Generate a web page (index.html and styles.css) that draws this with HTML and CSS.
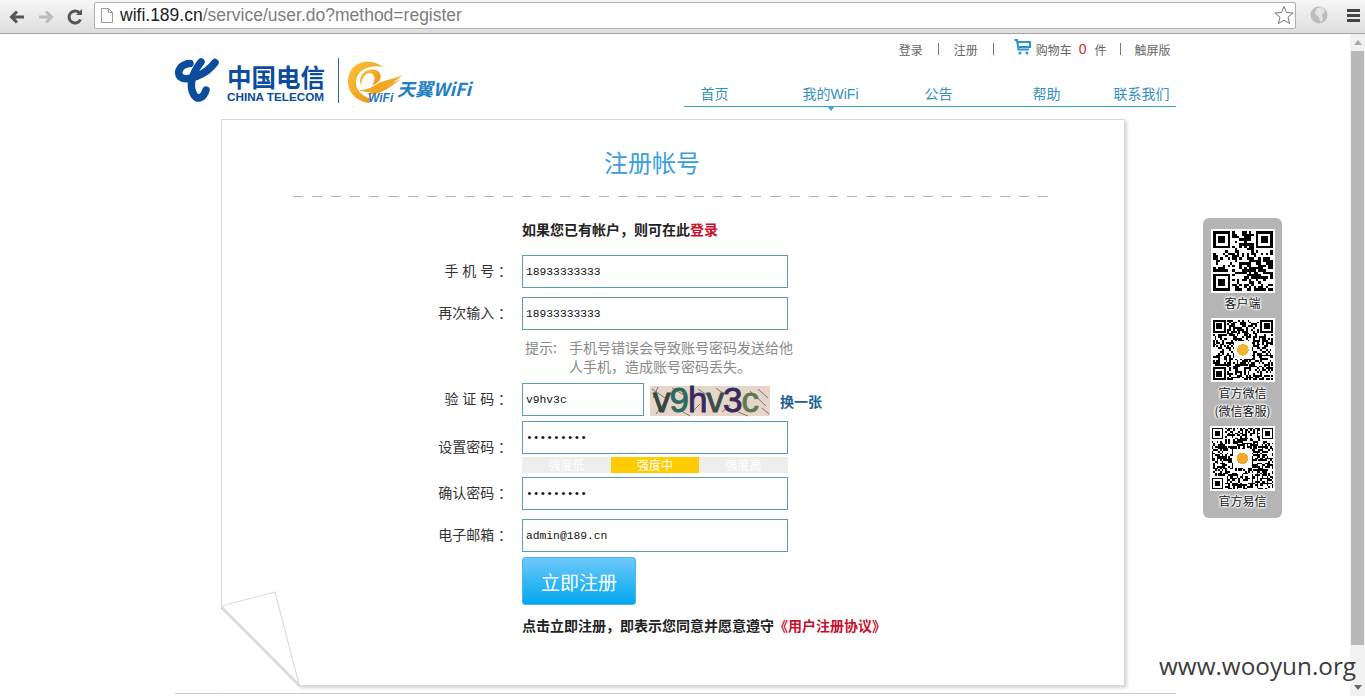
FILE: index.html
```html
<!DOCTYPE html>
<html lang="zh-CN">
<head>
<meta charset="utf-8">
<title>注册帐号</title>
<link rel="stylesheet" href="styles.css">
</head>
<body>
<div class="toolbar">
  <svg class="tb-btn" width="18" height="18" viewBox="0 0 18 18"><path class="arrow-dark" d="M16 9H4M9 3.5 3.5 9 9 14.500"/></svg>
  <svg class="tb-btn" width="18" height="18" viewBox="0 0 18 18"><path class="arrow-light" d="M2 9h12M9 3.500 14.500 9 9 14.500"/></svg>
  <svg class="tb-btn" width="18" height="18" viewBox="0 0 18 18"><path class="arrow-dark" d="M14.500 11.500A6 6 0 1 1 13.500 5"/><path class="fill-dark" d="M10 7h6V1z"/></svg>
  <div class="omnibox">
    <svg class="page-icon" width="12" height="15" viewBox="0 0 12 15"><path d="M.5.5h7l4 4v10H.5z M7.500.5v4h4"/></svg>
    <span class="url"><span class="url-host">wifi.189.cn</span>/service/user.do?method=register</span>
    <svg class="star" width="20" height="20" viewBox="0 0 20 20"><path d="M10 1.500 12.500 7.500 19 8 14 12.200 15.600 18.600 10 15.200 4.400 18.600 6 12.200 1 8 7.500 7.500z"/></svg>
  </div>
  <svg class="globe" width="18" height="18" viewBox="0 0 18 18"><circle cx="9" cy="9" r="8.500"/><path d="M7 2 12 1 15 5 12 9 13 14 10 16 9 11 6 9 5 6z"/></svg>
  <div class="tb-bars"></div>
</div>

<div class="viewport">
  <main class="page">
    <header class="header">
      <svg class="logo" width="298" height="46" viewBox="0 0 298 46">
        <defs>
          <linearGradient id="swirl" x1="0" y1="0" x2="1" y2="1">
            <stop offset="0" stop-color="#fbc43a"/><stop offset="1" stop-color="#e8900f"/>
          </linearGradient>
        </defs>
        <g class="ct-mark">
          <path d="M15 5.500C6 6 .5 14 5.500 19C12 24 31 17 40 4.500"/>
          <path d="M26 4C18 14 13 27 19 37C22.500 42 28 41 31 32"/>
        </g>
        <text class="ct-cn" x="52" y="29">中国电信</text>
        <text class="ct-en" x="52" y="43">CHINA TELECOM</text>
        <rect class="logo-rule" x="163" y="0" width="1" height="45"/>
        <g class="swirl-mark">
          <path d="M208 9C195-1 173 3 173 24C173 36 184 44 194 45L196 41C187 38 180 32 181 23C182 12 195 6 208 9z"/>
          <path d="M186 27C182 16 194 8 203 13C208 17 206 25 197 27C201 22 200 16 195 15C190 15 187 20 186 27z"/>
          <path d="M184 32C198 38 212 30 228 17C216 22 208 22 200 27C194 31 190 32 184 32z"/>
          <path d="M192 36C204 38 214 30 226 21C216 26 208 28 192 36z"/>
        </g>
        <text class="wf-small" x="193" y="44">WiFi</text>
        <text class="wf-big" x="222" y="38">天翼WiFi</text>
      </svg>
      <div class="header-right">
        <div class="top-links">
          <a class="tl">登录</a><i class="sep"></i>
          <a class="tl">注册</a><i class="sep"></i>
          <svg class="cart" width="17" height="16" viewBox="0 0 17 16"><path d="M.5 1H3L4.500 10.500H15M4 3H16V8H4.500"/><circle cx="6" cy="14" r="1.500"/><circle cx="13" cy="14" r="1.500"/></svg>
          <a class="tl cart-label">购物车</a><b class="cart-count">0</b><a class="tl">件</a><i class="sep sep-last"></i>
          <a class="tl">触屏版</a>
        </div>
        <nav class="nav">
          <a class="n1">首页</a>
          <a class="n2 current">我的WiFi</a>
          <a class="n3">公告</a>
          <a class="n4">帮助</a>
          <a class="n5">联系我们</a>
        </nav>
      </div>
    </header>

    <section class="card">
      <h1 class="title">注册帐号</h1>
      <div class="dash"></div>
      <p class="strong-line intro">如果您已有帐户，则可在此<a class="red">登录</a></p>

      <div class="row row-first"><label class="lbl">手 机 号 ：</label><input class="field" type="text" value="18933333333"></div>
      <div class="row row-next"><label class="lbl">再次输入 ：</label><input class="field" type="text" value="18933333333"></div>
      <div class="hint"><span class="hint-k">提示:</span><span class="hint-v">手机号错误会导致账号密码发送给他人手机，造成账号密码丢失。</span></div>
      <div class="row row-captcha">
        <label class="lbl">验 证 码 ：</label>
        <input class="field field-short" type="text" value="v9hv3c">
        <svg class="captcha" width="120" height="30" viewBox="0 0 120 30">
          <rect width="120" height="30" class="cap-bg"/>
          <path class="cap-noise" d="M2 3 18 14M8 1 3 12M22 2 34 9M30 24 40 30M6 28 14 17M48 3 60 11M66 2 74 8M88 26 98 30M100 5 116 20M108 3 118 12M112 22 119 28M42 26 50 18M72 26 80 19"/>
          <text class="cap-text" x="3" y="26"><tspan class="c1">v</tspan><tspan class="c2">9</tspan><tspan class="c3">h</tspan><tspan class="c4">v</tspan><tspan class="c3">3</tspan><tspan class="c5">c</tspan></text>
        </svg>
        <a class="swap">换一张</a>
      </div>
      <div class="row row-pass">
        <label class="lbl">设置密码 ：</label>
        <div class="pass-col">
          <input class="field" type="password" value="123456789">
          <div class="strength"><span>强度低</span><span class="on">强度中</span><span>强度高</span></div>
        </div>
      </div>
      <div class="row row-confirm"><label class="lbl">确认密码 ：</label><input class="field" type="password" value="123456789"></div>
      <div class="row row-next"><label class="lbl">电子邮箱 ：</label><input class="field" type="text" value="admin@189.cn"></div>
      <button class="submit" type="button">立即注册</button>
      <p class="strong-line agree">点击立即注册，即表示您同意并愿意遵守<a class="red">《用户注册协议》</a></p>

      <svg class="fold" width="92" height="100" viewBox="0 0 92 100">
        <path class="fold-cover" d="M0 15 79 94V100H0z"/>
        <path class="fold-shadow" d="M0 16.500 79 95.500"/>
        <path class="fold-face" d="M.5 15 54 1 78 93z"/>
      </svg>
    </section>
    <div class="foot-line"></div>
  </main>
  <div class="scrollbar">
    <i class="sb-up"></i>
    <div class="sb-thumb"></div>
    <i class="sb-down"></i>
  </div>
</div>

<aside class="qr-panel">
  <svg class="qr qr-a" data-n="25" data-seed="11" width="64" height="64"></svg>
  <span class="qr-label">客户端</span>
  <svg class="qr qr-b" data-n="33" data-seed="29" data-logo="#f0b732" width="64" height="64"></svg>
  <span class="qr-label qr-label-b">官方微信</span>
  <span class="qr-label qr-label-c">(微信客服)</span>
  <svg class="qr qr-c" data-n="37" data-seed="57" data-logo="#f3a72c" width="65" height="65"></svg>
  <span class="qr-label">官方易信</span>
</aside>

<div class="watermark">www.wooyun.org</div>
<script src="qr.js"></script>
</body>
</html>
```

FILE: styles.css
```css
* { box-sizing: border-box; }
html, body { margin: 0; padding: 0; height: 696px; overflow: hidden; background: #fff; }
body { font-family: "Liberation Sans", "Noto Sans CJK SC", sans-serif; font-size: 14px; color: #333; position: relative; }

.toolbar { height: 34px; display: flex; align-items: center; background: linear-gradient(#f6f6f6, #dedede); border-bottom: 1px solid #a3a3a3; padding-left: 8px; }
.tb-btn { margin-right: 11px; flex: none; }
.arrow-dark { fill: none; stroke: #555; stroke-width: 3; }
.arrow-light { fill: none; stroke: #bcbcbc; stroke-width: 3; }
.fill-dark { fill: #555; }
.omnibox { width: 1202px; height: 27px; margin-left: -1px; margin-top: -3px; background: #fff; border: 1px solid #b0b0b0; border-radius: 2px; display: flex; align-items: center; padding: 0 1px 0 6px; flex: none; }
.page-icon { flex: none; fill: #fff; stroke: #9a9a9a; }
.url { flex: 1; margin-left: 7px; font-size: 17.500px; color: #7d7d7d; white-space: nowrap; }
.url-host { color: #222; }
.star { flex: none; fill: #fff; stroke: #777; }
.globe { flex: none; margin: -3px 0 0 14px; }
.globe circle { fill: #bcbcbc; }
.globe path { fill: #e4e4e4; }
.tb-bars { flex: none; width: 13px; height: 13px; margin: -3px 0 0 19px; background: repeating-linear-gradient(180deg, #444 0 3px, transparent 3px 5px); }

.viewport { display: flex; height: 662px; overflow: hidden; }
.page { flex: 1; min-width: 0; }
.scrollbar { width: 15px; background: #f1f1f1; display: flex; flex-direction: column; align-items: center; }
.sb-up { margin-top: 6px; border: 4px solid transparent; border-top: 0; border-bottom: 5px solid #a8a8a8; }
.sb-thumb { width: 13px; height: 594px; margin-top: 6px; background: #b9b9b9; }
.sb-down { margin-top: 40px; border: 4px solid transparent; border-bottom: 0; border-top: 5px solid #666; }

.header { width: 1001px; margin: 0 auto; height: 85px; display: flex; justify-content: space-between; }
.logo { margin-top: 24px; flex: none; overflow: visible; }
.ct-mark path { fill: none; stroke: #0b4c9c; stroke-width: 7.500; stroke-linecap: round; }
.ct-cn { font-family: "Noto Sans CJK SC", sans-serif; font-weight: 700; font-size: 24.500px; fill: #0b4c9c; }
.ct-en { font-family: "Liberation Sans", sans-serif; font-weight: 700; font-size: 11.700px; fill: #0b4c9c; }
.logo-rule { fill: #2c6a9a; }
.swirl-mark path { fill: url(#swirl); }
.wf-small { font-family: "Liberation Sans", sans-serif; font-weight: 700; font-style: italic; font-size: 12px; fill: #2a76b8; }
.wf-big { font-family: "Noto Sans CJK SC", sans-serif; font-weight: 700; font-style: italic; font-size: 18px; fill: #1f7fc4; }
.header-right { width: 492px; flex: none; }
.top-links { height: 32px; display: flex; align-items: center; justify-content: flex-end; padding: 0 5px 2px 0; font-size: 12px; color: #666; }
.tl { color: #666; }
.sep { width: 1px; height: 12px; background: #777; margin: -1px 15px 0; }
.sep-last { margin: -1px 13px 0 14px; }
.cart { margin: -5px 5px 0 5px; fill: none; stroke: #2b93cf; stroke-width: 2; }
.cart circle { fill: #2b93cf; stroke: none; }
.cart-count { font-weight: 400; font-size: 14px; color: #d12a2a; margin: 0 8px 0 7px; }
.nav { position: relative; height: 42px; margin-top: -1px; padding-top: 19px; padding-left: 17px; display: flex; font-size: 14px; line-height: 20px; color: #3690c2; border-bottom: 1px solid #3aa8c8; white-space: nowrap; width: 492px; }
.n2 { margin-left: 74px; }
.n3 { margin-left: 66px; }
.n4 { margin-left: 80px; }
.n5 { margin-left: 53px; }
.current { position: relative; }
.current::after { content: ""; position: absolute; left: 24px; top: 22px; border: 4px solid transparent; border-bottom: 0; border-top: 5px solid #3aa8c8; }

.card { position: relative; width: 904px; height: 567px; margin-left: 221px; padding-top: 28px; background: #fff; border: 1px solid #d8d8d8; box-shadow: 2px 2px 3px #d5d5d5; }
.title { margin: 0 42px 0 0; text-align: center; font-weight: 400; font-size: 24px; line-height: 32px; color: #3a9de0; }
.dash { height: 1px; margin: 16px 73px 0 71px; background: repeating-linear-gradient(90deg, #b5b5b5 0 10px, transparent 10px 19.100px); }
.strong-line { margin: 0 0 0 300px; font-weight: 700; font-size: 14px; line-height: 20px; color: #222; font-family: "Noto Sans CJK SC", sans-serif; white-space: nowrap; }
.intro { margin-top: 22px; }
.red { color: #c8102e; }

.row { display: flex; align-items: center; }
.row-first { margin-top: 16px; }
.row-next { margin-top: 9px; }
.row-captcha { margin-top: 7px; }
.row-pass { margin-top: 5px; }
.row-confirm { margin-top: 4px; }
.lbl { width: 290px; text-align: right; margin-right: 10px; padding-bottom: 3px; font-size: 14px; word-spacing: .7px; color: #333; font-family: "Noto Sans CJK SC", sans-serif; white-space: pre; }
.field { display: block; width: 266px; height: 33px; padding: 0 3px; border: 1px solid #5b9ab8; border-radius: 0; outline: 0; background: #fff; font-family: "Liberation Mono", monospace; font-size: 11.300px; color: #111; }
.field-short { width: 122px; }
.captcha { margin: 3px 0 0 6px; flex: none; overflow: visible; }
.cap-bg { fill: #e6d5c9; }
.cap-noise { fill: none; stroke: #5f5a50; stroke-width: .8; }
.cap-text { font-family: "Liberation Sans", sans-serif; font-size: 35px; letter-spacing: -1px; stroke-width: .9; }
.c1 { fill: #33463f; stroke: #33463f; } .c2 { fill: #2f6a5c; stroke: #2f6a5c; } .c3 { fill: #352a5f; stroke: #352a5f; } .c4 { fill: #3a4c4a; stroke: #3a4c4a; } .c5 { fill: #5c7a50; stroke: #5c7a50; }
.swap { margin-left: 10px; margin-top: 2px; font-size: 14px; font-weight: 700; color: #1d5f8f; font-family: "Noto Sans CJK SC", sans-serif; white-space: nowrap; }
.hint { display: flex; margin: 8px 0 0 303px; width: 272px; font-size: 14px; line-height: 19px; color: #8a8a8a; font-family: "Noto Sans CJK SC", sans-serif; }
.hint-k { width: 44px; flex: none; }
.pass-col { width: 266px; }
.strength { display: flex; margin-top: 3px; height: 16px; background: #eee; font-size: 12px; line-height: 16px; color: #fff; text-align: center; font-family: "Noto Sans CJK SC", sans-serif; }
.strength span { flex: 1; }
.strength .on { flex: none; width: 88px; background: #fc0; }
.submit { display: block; margin: 5px 0 0 300px; width: 114px; height: 48px; border: 1px solid #4db6ea; border-radius: 3px; background: linear-gradient(#6ec9fb, #00a7ef); color: #fff; font-size: 19px; font-family: "Noto Sans CJK SC", sans-serif; padding: 0; }
.agree { margin-top: 10px; }

.fold { position: absolute; left: -1px; bottom: -6px; }
.fold-cover { fill: #fff; }
.fold-shadow { fill: none; stroke: #dcdcdc; stroke-width: 2.500; }
.fold-face { fill: #fff; stroke: #dedede; stroke-width: 1.200; }

.foot-line { width: 1001px; margin: 7px auto 0; height: 1px; background: #c9c9c9; }

.qr-panel { position: absolute; left: 1203px; top: 218px; width: 79px; height: 300px; padding-top: 11px; background: #b5b5b5; border-radius: 6px; display: flex; flex-direction: column; align-items: center; }
.qr { display: block; flex: none; background: #fff; shape-rendering: crispEdges; }
.qr-a { margin-left: 1px; }
.qr-b { margin-top: 5px; }
.qr-c { margin-top: 5px; }
.qr-label { margin-top: 1px; font-size: 12px; line-height: 18px; height: 19px; color: #111; font-family: "Noto Sans CJK SC", sans-serif; white-space: nowrap; text-shadow: 0 0 2px #fff, 0 0 2px #fff, 0 0 2px #fff, 0 0 3px #fff, 0 0 3px #fff, 0 0 3px #fff; }
.qr-label-b { margin-top: 2px; }
.qr-label-c { margin-top: -1px; }

.watermark { position: absolute; left: 1159px; top: 649px; font-family: "Open Sans", sans-serif; font-size: 24.300px; line-height: 33px; color: #3c3c3c; white-space: nowrap; }
```

FILE: qr.js
```js
(function () {
  var NS = "http://www.w3.org/2000/svg";
  function finder(grid, r, c) {
    for (var y = -1; y < 8; y++) for (var x = -1; x < 8; x++) {
      var row = r + y, col = c + x;
      if (!grid[row] || grid[row][col] === undefined) continue;
      var ring = x >= 0 && x <= 6 && y >= 0 && y <= 6 && (x === 0 || x === 6 || y === 0 || y === 6);
      var core = x >= 2 && x <= 4 && y >= 2 && y <= 4;
      grid[row][col] = ring || core;
    }
  }
  document.querySelectorAll(".qr").forEach(function (svg) {
    var n = +svg.dataset.n, s = +svg.dataset.seed, pad = 1, grid = [];
    function rnd() { s = (s * 1103515245 + 12345) & 0x7fffffff; return (s >> 12) % 100 / 100; }
    for (var r = 0; r < n; r++) {
      grid[r] = [];
      for (var c = 0; c < n; c++) grid[r][c] = rnd() < 0.52;
    }
    finder(grid, 0, 0); finder(grid, 0, n - 7); finder(grid, n - 7, 0);
    svg.setAttribute("viewBox", "0 0 " + (n + pad * 2) + " " + (n + pad * 2));
    var d = "";
    grid.forEach(function (row, y) {
      row.forEach(function (on, x) { if (on) d += "M" + (x + pad) + " " + (y + pad) + "h1v1h-1z"; });
    });
    var p = document.createElementNS(NS, "path");
    p.setAttribute("d", d);
    svg.appendChild(p);
    if (svg.dataset.logo) {
      var m = (n + pad * 2) / 2, w = n * 0.3;
      var bg = document.createElementNS(NS, "rect");
      bg.setAttribute("x", m - w / 2); bg.setAttribute("y", m - w / 2);
      bg.setAttribute("width", w); bg.setAttribute("height", w); bg.setAttribute("fill", "#fff");
      svg.appendChild(bg);
      var dot = document.createElementNS(NS, "circle");
      dot.setAttribute("cx", m); dot.setAttribute("cy", m); dot.setAttribute("r", w * 0.32);
      dot.setAttribute("fill", svg.dataset.logo);
      svg.appendChild(dot);
    }
  });
})();
```
